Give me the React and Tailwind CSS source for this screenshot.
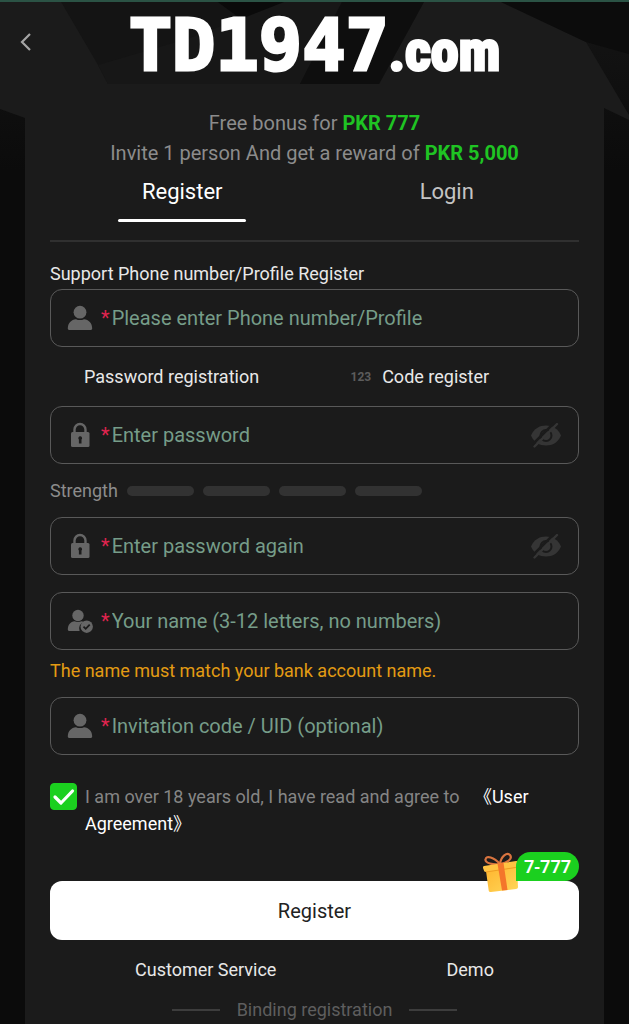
import React, { useState } from 'react';

const UserIcon = () => (
  <svg viewBox="0 0 26 26" className="h-[26px] w-[26px] fill-[#666666]" aria-hidden="true">
    <circle cx="13" cy="7.2" r="6.4" />
    <path d="M.8 23.600C.8 18 4.400 14.600 9 14.200c1.200.6 2.600.9 4 .9s2.800-.3 4-.9c4.600.4 8.200 3.800 8.200 9.400 0 .8-.5 1.400-1.300 1.400H2.100C1.300 25 .8 24.400.8 23.600Z" />
  </svg>
);

const LockIcon = () => (
  <svg viewBox="0 0 26 26" className="h-[26px] w-[26px]" aria-hidden="true">
    <path d="M7.500 11V7.500a5.500 5.500 0 0 1 11 0V11" fill="none" stroke="#666666" strokeWidth="2.400" />
    <rect x="4" y="10" width="18.500" height="15" rx="1.500" fill="#666666" />
    <path d="M13.200 14.200a2 2 0 0 0-1.300 3.400v3.900h2.600v-3.900a2 2 0 0 0-1.300-3.400Z" fill="#1b1b1b" />
  </svg>
);

const UserCheckIcon = () => (
  <svg viewBox="0 0 26 26" className="h-[26px] w-[26px]" aria-hidden="true">
    <g fill="#666666">
      <circle cx="11" cy="7.500" r="5.700" />
      <path d="M.8 21.500c0-5 3-8 6.700-8.300 2.200 1 4.800 1 7 0 .8.1 1.500.4 2.100.7a7 7 0 0 0-4 9.100H2.300C1.500 23 .8 22.400.8 21.500Z" />
      <circle cx="19.700" cy="18.700" r="6.200" />
    </g>
    <path d="m16.500 18.600 2.200 2.200 4-4.200" fill="none" stroke="#1b1b1b" strokeWidth="1.800" />
  </svg>
);

const EyeOffIcon = () => (
  <svg viewBox="0 0 32 26" className="h-[26px] w-8" aria-hidden="true">
    <path d="M1 13.500C4 6.500 9.500 3.500 16 3.500s12 3 15 10c-3 7-8.500 10-15 10s-12-3-15-10Z" fill="#353535" />
    <circle cx="16" cy="13.500" r="5.500" fill="none" stroke="#1b1b1b" strokeWidth="2" />
    <path d="M2.500 22.500 25.500-.5" stroke="#1b1b1b" strokeWidth="2.500" />
    <path d="M4.500 24.500 27 2" stroke="#353535" strokeWidth="2.400" strokeLinecap="round" />
  </svg>
);

const GiftIcon = () => (
  <svg viewBox="0 0 38 42" className="h-[42px] w-[38px]" aria-hidden="true">
    <defs>
      <linearGradient id="giftBox" x1="0" y1="0" x2="1" y2="1">
        <stop offset="0" stopColor="#ffb52e" />
        <stop offset="1" stopColor="#ffd75a" />
      </linearGradient>
    </defs>
    <g fill="none" stroke="#d9743f" strokeWidth="2.200" strokeLinecap="round">
      <path d="M18 12C12 5 4 3 3.500 7.500 3 11 11 13 18 12Z" />
      <path d="M18 12C19 4 25 0 28 3c3 4-3 8-10 9Z" />
    </g>
    <path d="m4 19 31-4 1 20c0 1-1 2-2 2L9 40c-1.500 0-2-.5-2.300-1.500Z" fill="url(#giftBox)" />
    <path d="m2 14 32-5c1.500 0 2.500.5 2.700 2l.8 4L4 20c-1.500 0-2-1-2.200-2l-.8-2c0-1 0-1.700 1-2Z" fill="#ffc342" />
    <path d="m4 20 33-5" stroke="#ef9d22" />
    <path d="m15.500 11.700 6-1L25.500 38l-5.500.6Z" fill="#f4762b" />
  </svg>
);

const Backdrop = () => (
  <svg
    viewBox="0 0 629 200"
    preserveAspectRatio="none"
    className="absolute inset-x-0 top-0 h-[200px] w-full"
    aria-hidden="true"
  >
    <defs>
      <linearGradient id="fade" x1="0" y1="0" x2="0" y2="1">
        <stop offset="0" stopColor="#151515" />
        <stop offset="1" stopColor="#0b0b0b" />
      </linearGradient>
    </defs>
    <rect width="629" height="200" fill="#0b0b0b" />
    <path d="M0 0H629V170H0Z" fill="url(#fade)" />
    <path d="M0 0H497L586 42 629 115V120L604 108V130H25V118L0 109Z" fill="#1b1b1b" />
    <path d="M60 0H425L379 84H108L98 65Z" fill="#141414" />
    <path d="M98 65 190 38 289 0H343L300 84H108Z" fill="#171717" />
    <path d="M215 0H289L241 19Z" fill="#0a0a0a" />
    <path d="M343 0H425L379 84H300Z" fill="#0e0e0e" />
    <path d="M497 0H629V54L586 42Z" fill="#0c0c0c" />
    <rect width="629" height="2" fill="#2b5345" />
  </svg>
);

const Field = ({ id, icon, placeholder, type = 'text' }) => {
  const [visible, setVisible] = useState(false);
  const isPassword = type === 'password';

  return (
    <div className="flex h-[58px] items-center rounded-xl border border-[#595959] px-4">
      {icon}
      <label htmlFor={id} className="mr-0.5 ml-2 text-xl text-[#e0244f]">*</label>
      <input
        id={id}
        type={isPassword && !visible ? 'password' : 'text'}
        aria-label={placeholder}
        placeholder={placeholder}
        className="min-w-0 flex-1 bg-transparent text-xl text-white outline-none placeholder:text-[#769d89]"
      />
      {isPassword && (
        <button type="button" aria-label="Show password" onClick={() => setVisible(!visible)}>
          <EyeOffIcon />
        </button>
      )}
    </div>
  );
};

const App = () => {
  const [agreed, setAgreed] = useState(true);

  return (
    <div className="relative min-h-screen bg-[#0b0b0b] font-[Roboto,'Noto_Sans_CJK_SC',sans-serif] text-lg text-[#e8e8e8]">
      <Backdrop />

      <header className="relative grid h-[90px] grid-cols-[52px_1fr_52px] items-start">
        <button type="button" aria-label="Back" className="flex h-[84px] items-center justify-center">
          <svg viewBox="0 0 12 20" className="h-5 w-3" aria-hidden="true">
            <path d="M10 2 2 10l8 8" fill="none" stroke="#a5a5a5" strokeWidth="2.200" />
          </svg>
        </button>
        <h1 className="whitespace-nowrap text-center font-['DejaVu_Sans_Mono',monospace] text-[72px] leading-[90px] font-bold text-white [-webkit-text-stroke:3px_white]">
          TD1947
          <span className="font-['Roboto_Condensed','Liberation_Sans_Narrow',sans-serif] text-[56px] leading-none">.com</span>
        </h1>
      </header>

      <main className="relative mx-[25px] bg-[#1b1b1b] px-[25px] pt-[18px]">
        <div className="text-center text-xl leading-[30px] text-[#8c8c8c]">
          <p>Free bonus for <b className="font-bold text-[#1fc423]">PKR 777</b></p>
          <p>Invite 1 person And get a reward of <b className="font-bold text-[#1fc423]">PKR 5,000</b></p>
        </div>

        <div className="grid h-[74px] grid-cols-2 border-b-2 border-[#303030] text-[22px] leading-[48px]">
          <button type="button" className="flex flex-col items-center text-white">
            Register
            <span className="mt-[3px] h-[3px] w-32 rounded-full bg-white" />
          </button>
          <button type="button" className="flex flex-col items-center text-[#c4c4c4]">Login</button>
        </div>

        <form onSubmit={(e) => e.preventDefault()}>
          <p className="pt-[17px] leading-[30px]">Support Phone number/Profile Register</p>
          <Field id="phone" icon={<UserIcon />} placeholder="Please enter Phone number/Profile" />

          <div className="grid h-[59px] grid-cols-2">
            <button type="button" className="pl-[34px] text-left">Password registration</button>
            <button type="button" className="flex items-center gap-[11px] pl-9">
              <span className="text-xs font-bold text-[#5c5c5c]">123</span>
              Code register
            </button>
          </div>

          <Field id="password" type="password" icon={<LockIcon />} placeholder="Enter password" />
          <div className="flex h-[53px] items-center gap-[9px] text-[#8c8c8c]">
            Strength
            {[1, 2, 3, 4].map((level) => (
              <span key={level} className="h-2.5 w-[67px] rounded-full bg-[#323232]" />
            ))}
          </div>
          <Field id="confirm" type="password" icon={<LockIcon />} placeholder="Enter password again" />
          <div className="h-[17px]" />
          <Field id="name" icon={<UserCheckIcon />} placeholder="Your name (3-12 letters, no numbers)" />
          <p className="pt-1.5 pb-[11px] leading-[30px] text-[#e39b13]">The name must match your bank account name.</p>
          <Field id="invite" icon={<UserIcon />} placeholder="Invitation code / UID (optional)" />

          <div className="flex gap-2 pt-7 leading-[27px]">
            <span className="relative h-[27px] w-[27px] shrink-0">
              <input
                id="agree"
                type="checkbox"
                checked={agreed}
                onChange={() => setAgreed(!agreed)}
                className="block h-[27px] w-[27px] appearance-none rounded border border-[#1bd01f] checked:bg-[#1bd01f]"
              />
              {agreed && (
                <svg viewBox="0 0 27 27" className="pointer-events-none absolute inset-0" aria-hidden="true">
                  <path d="m5 14 6 6L22.500 8" fill="none" stroke="white" strokeWidth="3.200" strokeLinecap="round" strokeLinejoin="round" />
                </svg>
              )}
            </span>
            <p>
              <label htmlFor="agree" className="mr-2.5 text-[#858585]">I am over 18 years old, I have read and agree to</label>{' '}
              <a href="#agreement" className="text-white">《User Agreement》</a>
            </p>
          </div>

          <div className="relative pt-11">
            <button type="submit" className="h-[59px] w-full rounded-xl bg-white text-xl text-[#222222]">
              Register
            </button>
            <div className="absolute top-[15px] right-0 flex items-start">
              <GiftIcon />
              <span className="-ml-1 h-[29px] rounded-r-full rounded-tl-full bg-[#1bd01f] px-2 font-['Noto_Sans',sans-serif] text-lg leading-[29px] font-semibold text-white">
                7-777
              </span>
            </div>
          </div>
        </form>

        <div className="flex h-14 items-center justify-around pt-1">
          <a href="#service">Customer Service</a>
          <a href="#demo">Demo</a>
        </div>

        <div className="flex h-7 items-center justify-center gap-[17px] text-[#5e5e5e]">
          <span className="h-0.5 w-12 bg-[#3d3d3d]" />
          Binding registration
          <span className="h-0.5 w-12 bg-[#3d3d3d]" />
        </div>
      </main>
    </div>
  );
};

export default App;
